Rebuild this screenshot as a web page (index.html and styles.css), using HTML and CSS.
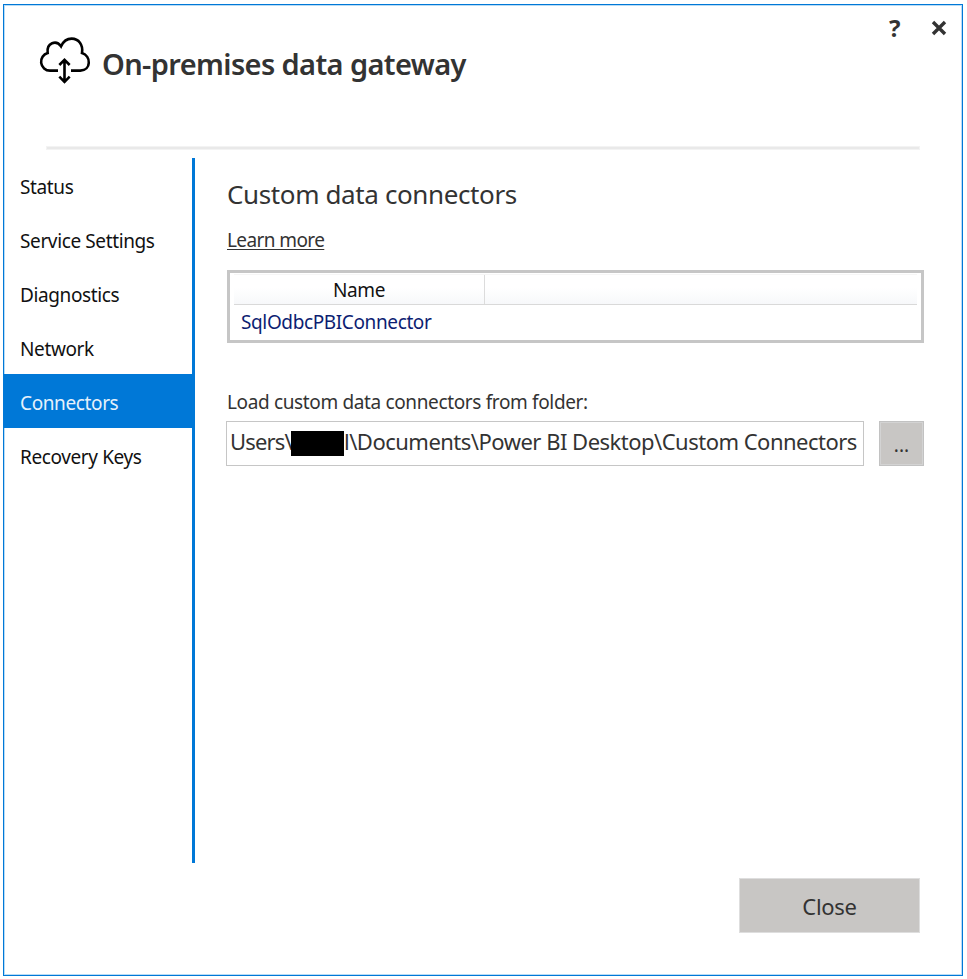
FILE: index.html
```
<!DOCTYPE html>
<html lang="en">
<head>
<meta charset="utf-8">
<title>On-premises data gateway</title>
<link rel="stylesheet" href="styles.css">
</head>
<body>
<main class="window">
  <header class="header">
    <svg class="cloud" viewBox="117 108 156 144" aria-hidden="true">
      <path d="M174 212H150A27 27 0 0 1 143 159C139 128 169 119 183 139C190 124 201 116 215 116C236 116 250 134 246 159C274 168 274 211 241 212H213M193.500 182V243M178 195L193.500 179.500L209 195M178 230L193.500 245.500L209 230"/>
    </svg>
    <h1 class="title">On-premises data gateway</h1>
    <div class="controls">
      <span class="help">?</span>
      <svg class="dismiss" viewBox="0 0 16 16" aria-hidden="true"><path d="M2 2L14 14M14 2L2 14"/></svg>
    </div>
  </header>
  <div class="rule"></div>
  <div class="body">
    <nav class="nav">
      <a class="item">Status</a>
      <a class="item">Service Settings</a>
      <a class="item">Diagnostics</a>
      <a class="item">Network</a>
      <a class="item active">Connectors</a>
      <a class="item">Recovery Keys</a>
    </nav>
    <section class="content">
      <h2 class="heading">Custom data connectors</h2>
      <a class="learn">Learn more</a>
      <div class="table">
        <div class="thead"><span class="col">Name</span></div>
        <div class="row">SqlOdbcPBIConnector</div>
      </div>
      <div class="label">Load custom data connectors from folder:</div>
      <div class="folder">
        <div class="path"><span class="user">Users\</span><span class="mask"></span><span class="rest">l\Documents\Power BI Desktop\Custom Connectors</span></div>
        <button class="browse">...</button>
      </div>
    </section>
  </div>
  <footer class="footer"><button class="close">Close</button></footer>
</main>
</body>
</html>
```
FILE: styles.css
```
* { box-sizing: border-box; }
body {
  margin: 0;
  padding: 4px 4px 3px 3px;
  background: #fff;
  color: #333;
  font-family: "Noto Sans", "Open Sans", sans-serif;
  font-size: 19px;
  letter-spacing: -0.38px;
}
h1, h2 { margin: 0; font-weight: 400; }
button { padding: 0; font: inherit; color: inherit; border-radius: 0; }
.window {
  display: flex;
  flex-direction: column;
  width: 960px;
  height: 972px;
  border: 1px solid #0078d7;
  box-shadow: inset 0 0 0 1px #b8dcf6;
}
.header { display: flex; height: 141px; padding-left: 35px; }
.cloud { width: 52px; height: 48px; margin-top: 31px; fill: none; stroke: #000; stroke-width: 7.800; }
.title { margin: 37px 0 0 11px; font-size: 29px; line-height: 44px; font-weight: 600; letter-spacing: -0.61px; white-space: nowrap; }
.controls { display: flex; margin-left: auto; padding-right: 15px; gap: 31px; }
.help { margin-top: 8px; font-size: 24px; line-height: 30px; font-weight: 700; }
.dismiss { width: 16px; height: 16px; margin-top: 15px; fill: none; stroke: #333; stroke-width: 3.400; }
.rule { width: 874px; height: 4px; margin-left: 42px; background: #e9e9e9; border: 1px solid #f3f3f3; }
.body { display: flex; height: 705px; margin-top: 8px; }
.nav { width: 191px; border-right: 3px solid #0078d7; color: #111; }
.item { display: flex; align-items: center; height: 54px; padding: 4px 0 0 16px; white-space: nowrap; }
.active { background: #0078d7; color: #e5f1fb; }
.content { width: 697px; margin-left: 32px; white-space: nowrap; }
.heading { margin-top: 17px; font-size: 26px; line-height: 38px; letter-spacing: -0.38px; }
.learn { display: block; width: max-content; margin-top: 14px; line-height: 26px; letter-spacing: -0.6px; text-decoration: underline; text-underline-offset: 2px; text-decoration-thickness: 1px; }
.table { height: 73px; margin-top: 17px; border: 3px solid #c6c6c6; padding: 1px 4px; }
.thead { height: 31px; border-top: 1px solid #f6f6f6; border-bottom: 1px solid #d9d9d9; background: linear-gradient(#fff 45%, #f7f8fa); }
.col { display: block; width: 251px; height: 29px; border-right: 1px solid #dcdcdc; line-height: 31px; text-align: center; color: #111; }
.row { padding-left: 7px; line-height: 35px; color: #0c1d72; }
.label { margin-top: 46px; line-height: 26px; letter-spacing: -0.36px; }
.folder { display: flex; justify-content: space-between; margin-top: 6px; }
.path { display: flex; align-items: center; width: 638px; height: 45px; margin-left: -1px; padding-left: 3px; border: 1px solid #c6c6c6; font-size: 22px; line-height: 30px; letter-spacing: -0.51px; overflow: hidden; }
.user, .rest { flex: none; padding-bottom: 5px; }
.user { width: 61px; letter-spacing: -0.85px; }
.mask { flex: none; width: 53px; height: 25px; background: #000; }
.browse { width: 45px; height: 45px; padding-top: 3px; border: 1px solid #c2c2c2; background: #c8c6c4; box-shadow: inset 0 0 0 1px #d3d3d3; }
.footer { display: flex; justify-content: flex-end; margin-top: 15px; padding-right: 42px; }
.close { width: 181px; height: 55px; border: 1px solid #dedede; background: #c8c6c4; font-size: 22px; letter-spacing: -0.3px; }
```
